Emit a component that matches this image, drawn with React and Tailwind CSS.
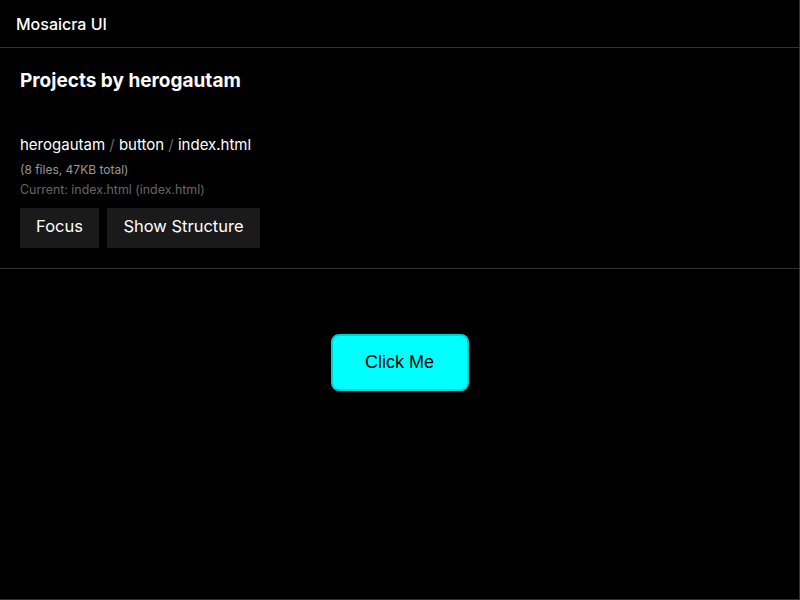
import React from 'react';

const App = () => {
  return (
    <div className="w-[800px] h-[600px] bg-black text-white border-r border-b border-[#333] flex flex-col font-['Inter',sans-serif]">
      {/* Header */}
      <div className="h-[48px] border-b border-[#333] flex items-center px-4">
        <span className="text-[16px] font-medium">Mosaicra UI</span>
      </div>

      {/* Project info */}
      <div className="px-5 pt-[20px] pb-[20px] border-b border-[#333]">
        <h2 className="text-[19px] font-bold leading-[26px]">Projects by herogautam</h2>
        <div className="mt-[41px] text-[15px] leading-[20px]">
          herogautam <span className="text-[#666]">/</span> button <span className="text-[#666]">/</span> index.html
        </div>
        <div className="mt-[7px] text-[12px] leading-[16px] text-[#999]">(8 files, 47KB total)</div>
        <div className="mt-[4px] text-[12.4px] leading-[16px] text-[#666]">Current: index.html (index.html)</div>
        <div className="mt-[10px] flex gap-2">
          <button className="h-[40px] w-[79px] pb-[3px] bg-[#1a1a1a] text-[16.5px]">Focus</button>
          <button className="h-[40px] w-[153px] pb-[3px] bg-[#1a1a1a] text-[16.5px]">Show Structure</button>
        </div>
      </div>

      {/* Preview */}
      <div className="flex-1 flex justify-center pt-[65px]">
        <button className="w-[138px] h-[57px] rounded-[8px] bg-[#00ffff] border-2 border-[#00d0d0] text-black text-[18px] font-['Liberation_Sans',Arial,sans-serif]">
          Click Me
        </button>
      </div>
    </div>
  );
};

export default App;
